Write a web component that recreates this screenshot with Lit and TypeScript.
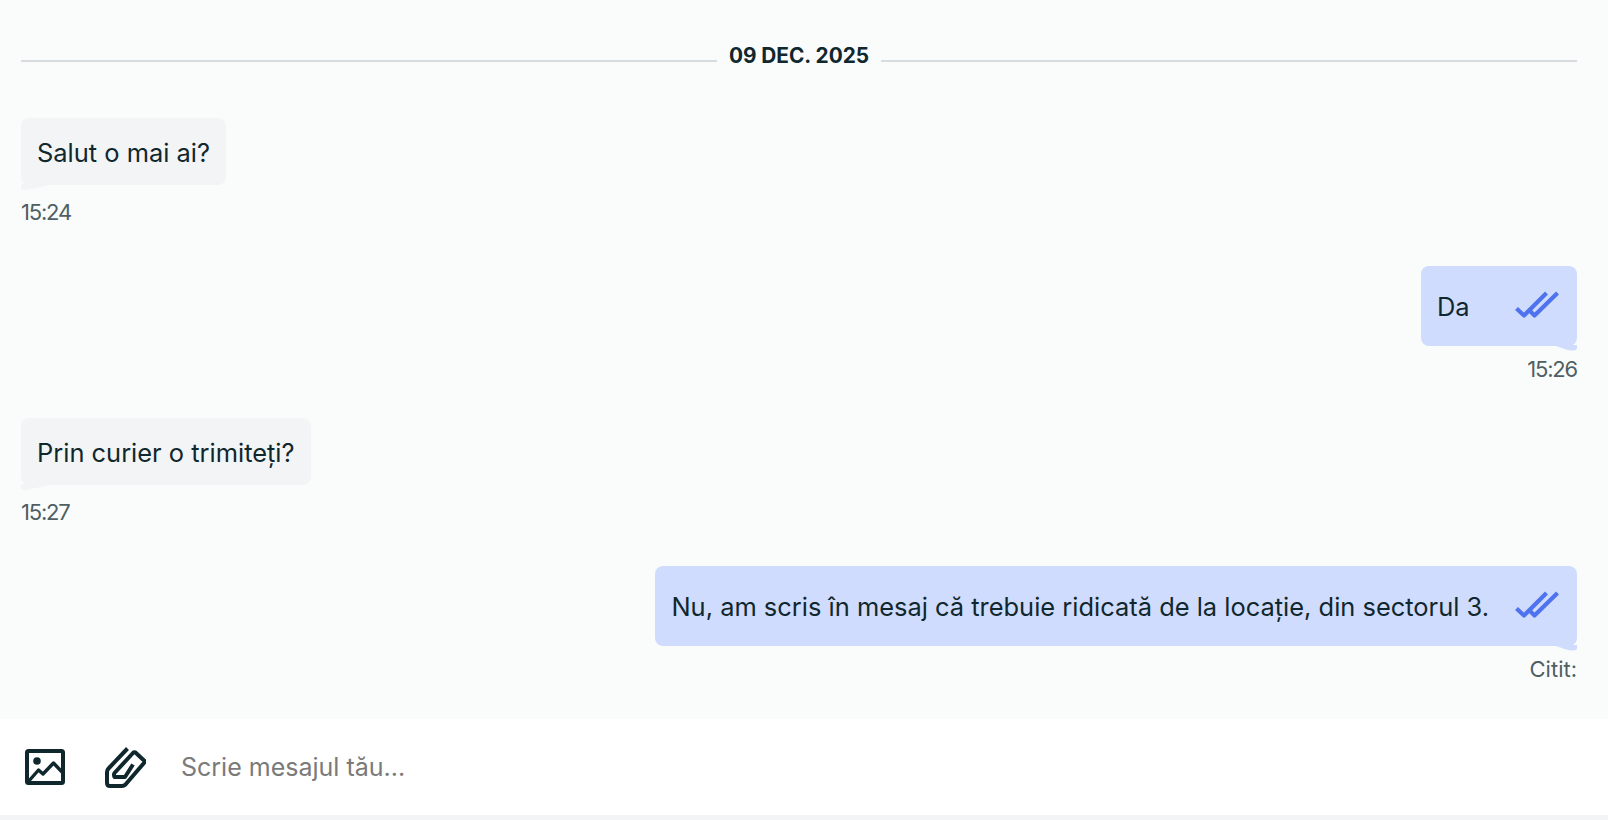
import { LitElement, html, css, svg } from 'lit';
import { customElement } from 'lit/decorators.js';

type Msg = { text: string; mine: boolean; meta: string };

const MESSAGES: Msg[] = [
  { text: 'Salut o mai ai?', mine: false, meta: '15:24' },
  { text: 'Da', mine: true, meta: '15:26' },
  { text: 'Prin curier o trimiteți?', mine: false, meta: '15:27' },
  { text: 'Nu, am scris în mesaj că trebuie ridicată de la locație, din sectorul 3.', mine: true, meta: 'Citit:' },
];

const checks = svg`<svg class="checks" width="44" height="27" viewBox="0 0 44 27" fill="none" stroke="#4f73ee" stroke-width="4.2" stroke-linejoin="round">
  <path d="M1.5 17.5 L9 24.5 L31.5 2"/>
  <path d="M14 19 L19.5 24.5 L42.5 2"/>
</svg>`;

const tailIn = svg`<svg class="tail" width="34" height="7" viewBox="0 0 34 7"><path d="M0 0 H34 L8 5.4 Q3 6.4 0 5.6 Z"/></svg>`;
const tailOut = svg`<svg class="tail" width="24" height="7" viewBox="0 0 24 7"><path d="M0 0 H24 V3 Q24 5.6 19 5.6 Q16 5.6 13 4.6 Z"/></svg>`;

@customElement('app-root')
export class AppRoot extends LitElement {
  static override styles = css`
    :host {
      display: block;
      height: 820px;
      background: #f3f4f6;
      font-family: 'Inter', 'Noto Sans', sans-serif;
      color: #10272d;
      overflow: hidden;
    }

    .thread {
      height: 719px;
      box-sizing: border-box;
      background: #fafcfc;
      padding: 41px 31px 0 21px;
    }

    .date {
      display: flex;
      align-items: center;
      gap: 12px;
      height: 28px;
      margin-bottom: 49px;
      font-size: 20.8px;
      font-weight: 700;
      white-space: nowrap;
    }

    .date i {
      flex: 1;
      height: 2px;
      margin-top: 11px;
      background: #d5dde0;
    }

    .row {
      display: flex;
      flex-direction: column;
      align-items: flex-start;
      margin-bottom: 42px;
    }

    .row.mine {
      align-items: flex-end;
      margin-bottom: 37px;
    }

    .bubble {
      display: flex;
      position: relative;
      align-items: center;
      gap: 26px;
      padding: 21px 16px 19px;
      border-radius: 8px;
      background: #f3f4f6;
      font-size: 25.45px;
      line-height: 27px;
    }

    .mine .bubble {
      background: #d0dcfd;
      padding: 0 18px 0 16px;
      height: 80px;
      box-sizing: border-box;
    }

    .mine .bubble span {
      min-width: 52px;
    }

    .checks {
      margin-top: -3px;
    }

    .tail {
      position: absolute;
      left: 0;
      bottom: -6px;
      display: block;
      fill: #f3f4f6;
    }

    .mine .tail {
      left: auto;
      right: 0;
      fill: #d0dcfd;
    }

    .meta {
      margin-top: 15px;
      font-size: 22px;
      letter-spacing: -1.2px;
      line-height: 24px;
      color: #4f5f63;
    }

    .mine .meta {
      margin-top: 11px;
    }

    .meta.word {
      letter-spacing: 0;
    }

    .composer {
      display: flex;
      align-items: center;
      height: 96px;
      background: #fff;
      padding-left: 25px;
    }

    .composer button {
      display: block;
      padding: 0;
      border: 0;
      background: none;
      line-height: 0;
    }

    .clip {
      margin-left: 40px;
    }

    .composer input {
      flex: 1;
      margin-left: 35px;
      padding: 0;
      border: 0;
      outline: 0;
      background: none;
      font: inherit;
      font-size: 25px;
    }

    .composer input::placeholder {
      color: #7a7a7a;
      opacity: 1;
    }
  `;

  override render() {
    return html`
      <section class="thread">
        <div class="date"><i></i>09 DEC. 2025<i></i></div>
        ${MESSAGES.map(
          (m) => html`
            <div class="row ${m.mine ? 'mine' : ''}">
              <div class="bubble">
                <span>${m.text}</span>
                ${m.mine ? checks : ''}
                ${m.mine ? tailOut : tailIn}
              </div>
              <div class="meta ${m.meta.includes(':') && m.meta.endsWith(':') ? 'word' : ''}">${m.meta}</div>
            </div>
          `
        )}
      </section>
      <footer class="composer">
        <button aria-label="Imagine">
          <svg width="40" height="36" viewBox="0 0 40 36" fill="none" stroke="#10272d" stroke-width="4" stroke-linejoin="round">
            <rect x="2" y="2" width="36" height="32" rx="1.5"/>
            <circle cx="12" cy="12" r="3.8" fill="#10272d" stroke="none"/>
            <path d="M3 33 L13.5 21 L18 25 L28.5 14 L38 24" stroke-width="3.4"/>
          </svg>
        </button>
        <button class="clip" aria-label="Atașează">
          <svg width="41" height="41" viewBox="0 0 41 41" fill="none" stroke="#10272d" stroke-width="4" stroke-linejoin="round">
            <path d="M22.5 1.5 L3.5 21.5 Q2 23 2 25 V36 Q2 39 5 39 H17 Q19 39 20.5 37.5 L39 16 Q40 14.5 39 13.5 L31 6 Q29.5 4.5 28 6 L9.5 26 Q8.5 27.5 9.5 30 L20 30 L28 17.5"/>
          </svg>
        </button>
        <input placeholder="Scrie mesajul tău..." />
      </footer>
    `;
  }
}
